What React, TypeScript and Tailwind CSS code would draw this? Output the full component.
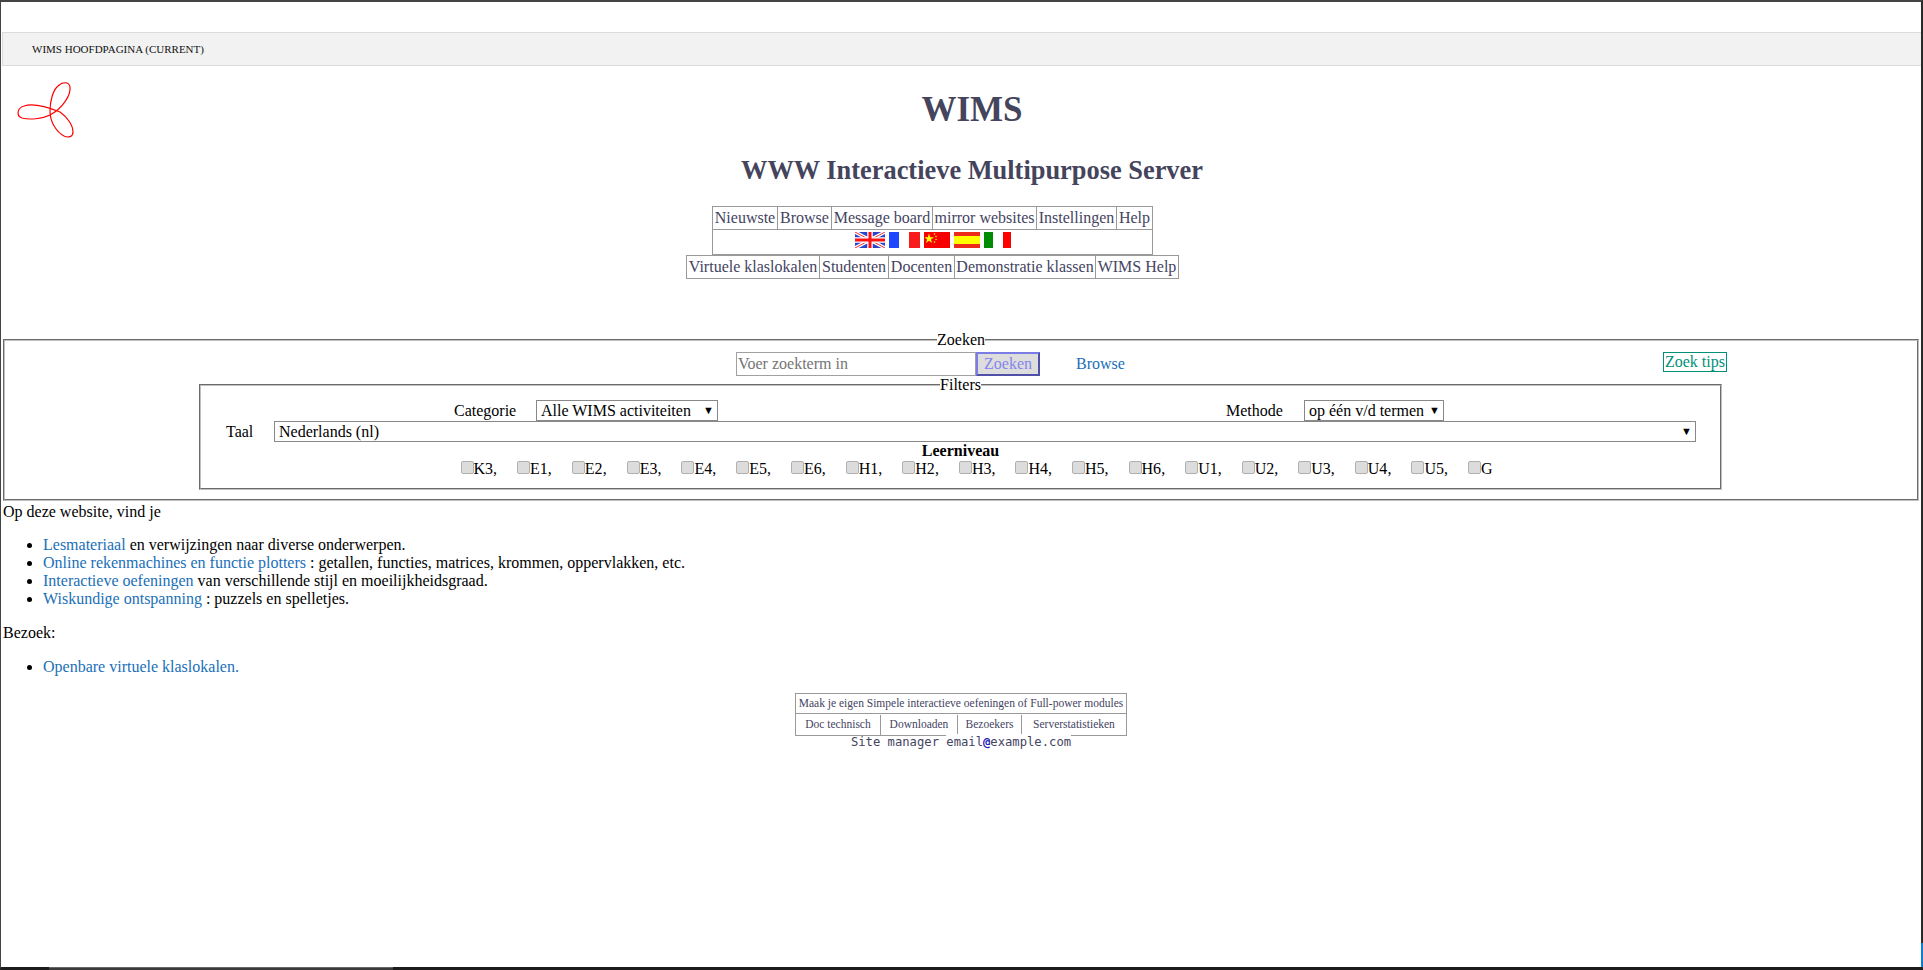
import React from "react";

const serif = "font-['Liberation_Serif',serif]";

const levels = ["K3", "E1", "E2", "E3", "E4", "E5", "E6", "H1", "H2", "H3", "H4", "H5", "H6", "U1", "U2", "U3", "U4", "U5", "G"];

const topNav = [
  { label: "Nieuwste", width: "w-[65px]" },
  { label: "Browse", width: "w-[54px]" },
  { label: "Message board", width: "w-[101px]" },
  { label: "mirror websites", width: "w-[104px]" },
  { label: "Instellingen", width: "w-[80px]" },
  { label: "Help", width: "w-[36px]" },
];

const classNav = [
  { label: "Virtuele klaslokalen", width: "w-[133px]" },
  { label: "Studenten", width: "w-[69px]" },
  { label: "Docenten", width: "w-[66px]" },
  { label: "Demonstratie klassen", width: "w-[141px]" },
  { label: "WIMS Help", width: "w-[83px]" },
];

const Logo = () => (
  <svg width="60" height="60" viewBox="0 0 60 60" className="block" fill="none" stroke="#f00" strokeWidth="1.2">
    <path d="M35 34C27 38 14 39 7 37C1 35 2 27 9 25C18 22 30 25 45 31C52 36 58 44 58 51C58 56 53 57 49 55C42 51 35 42 35 30C35 20 38 9 43 5C47 1 54 0 55 6C56 14 48 27 35 34Z" />
  </svg>
);

const FlagUk = () => (
  <svg width="30" height="16" viewBox="0 0 30 16" className="block">
    <rect width="30" height="16" fill="#2a46c8" />
    <path d="M0 0L30 16M30 0L0 16" stroke="#fff" strokeWidth="3.5" />
    <path d="M0 0L30 16M30 0L0 16" stroke="#f33" strokeWidth="1" />
    <path d="M15 0V16M0 8H30" stroke="#fff" strokeWidth="5.5" />
    <path d="M15 0V16M0 8H30" stroke="#f11" strokeWidth="3" />
  </svg>
);

const FlagFr = () => (
  <svg width="31" height="16" viewBox="0 0 31 16" className="block">
    <rect width="10" height="16" fill="#1f47ff" />
    <rect x="10" width="10" height="16" fill="#fff" />
    <rect x="20" width="11" height="16" fill="#f91c1c" />
  </svg>
);

const FlagCn = () => (
  <svg width="26" height="16" viewBox="0 0 26 16" className="block">
    <rect width="26" height="16" fill="#f80000" />
    <path d="M5 1.5L6.2 5.2H10L6.9 7.4L8.1 11L5 8.8L1.9 11L3.1 7.4L0.5 5.2H3.8Z" fill="#ff0" />
    <circle cx="10.5" cy="2" r=".8" fill="#ff0" />
    <circle cx="12" cy="4.5" r=".8" fill="#ff0" />
    <circle cx="12" cy="7.5" r=".8" fill="#ff0" />
    <circle cx="10.5" cy="10" r=".8" fill="#ff0" />
  </svg>
);

const FlagEs = () => (
  <svg width="26" height="16" viewBox="0 0 26 16" className="block">
    <rect width="26" height="16" fill="#ee2a1a" />
    <rect y="4" width="26" height="8" fill="#ff0" />
  </svg>
);

const FlagIt = () => (
  <svg width="27" height="16" viewBox="0 0 27 16" className="block">
    <rect width="9" height="16" fill="#008c00" />
    <rect x="9" width="10" height="16" fill="#fff" />
    <rect x="19" width="8" height="16" fill="#f00" />
  </svg>
);

const NavCell = ({ children, className }: { children: React.ReactNode; className: string }) => (
  <td className={"border border-[#999] h-[23px] leading-none text-center whitespace-nowrap text-[#44445f] " + className}>{children}</td>
);

const SelectBox = ({ label, className }: { label: string; className: string }) => (
  <div className={"flex items-center justify-between bg-white border border-[#888] pl-[4px] pr-[3px] h-[21px] " + className}>
    <span>{label}</span>
    <span className="text-[11px] leading-none">▼</span>
  </div>
);

export default function App() {
  return (
    <div className={serif + " relative h-[970px] w-full bg-white text-[16px] text-black border-t-2 border-l border-r-2 border-b-[3px] border-t-[#444] border-l-[#444] border-r-[#2a2a2a] border-b-[#1c1c1c]"}>
      <div className="mt-[30px] ml-px h-[34px] flex items-center pl-[29px] pt-px bg-[#f2f2f2] border-y border-l border-[#dcdcdc] text-[11px] text-[#111]">
        WIMS HOOFDPAGINA (CURRENT)
      </div>

      <div className="absolute left-[14px] top-[79px]">
        <Logo />
      </div>

      <h1 className="mt-[24px] pl-[22px] text-center text-[35px] font-bold leading-[40px] text-[#44445c]">WIMS</h1>
      <h2 className="mt-[25px] pl-[22px] text-center text-[26.4px] font-bold leading-[30px] text-[#44445c]">WWW Interactieve Multipurpose Server</h2>

      <table className="ml-[711px] mt-[21px] border-collapse">
        <tbody>
          <tr>
            {topNav.map((t) => (
              <NavCell key={t.label} className={t.width}>{t.label}</NavCell>
            ))}
          </tr>
          <tr>
            <td colSpan={6} className="border border-[#999] h-[25px]">
              <div className="flex justify-center gap-[4px] pb-[4px]">
                <FlagUk />
                <FlagFr />
                <FlagCn />
                <FlagEs />
                <FlagIt />
              </div>
            </td>
          </tr>
        </tbody>
      </table>
      <table className="ml-[685px] border-collapse">
        <tbody>
          <tr>
            {classNav.map((t) => (
              <NavCell key={t.label} className={t.width}>{t.label}</NavCell>
            ))}
          </tr>
        </tbody>
      </table>

      <fieldset className="mt-[52px] ml-[2px] mr-[2px] h-[170px] border-2 [border-style:groove] border-[#c0c0c0]">
        <legend className="mx-auto leading-[18px]">Zoeken</legend>
        <div className="relative h-[24px] mt-[3px] flex">
          <div className="flex ml-[731px]">
            <div className="w-[240px] h-[24px] border border-[#a0a0a0] pl-[1px] leading-[22px] text-[#757575]">Voer zoekterm in</div>
            <div className="w-[64px] h-[24px] border-2 border-t-[#7c7ce6] border-l-[#7c7ce6] border-r-[#5050a8] border-b-[#5050a8] bg-[#dddddd] text-center leading-[20px] text-[#8585ee]">Zoeken</div>
          </div>
          <a className="ml-[36px] leading-[24px] text-[#1a6fb8]">Browse</a>
          <a className="ml-[538px] h-[20px] px-[1px] leading-[18px] border border-[#00907a] text-[#00907a]">Zoek tips</a>
        </div>
        <fieldset className="mt-[1px] ml-[194px] w-[1523px] h-[113px] border-2 [border-style:groove] border-[#c0c0c0]">
          <legend className="mx-auto leading-[16px]">Filters</legend>
          <div className="flex items-center h-[21px] mt-[7px]">
            <span className="ml-[253px] w-[82px]">Categorie</span>
            <SelectBox label="Alle WIMS activiteiten" className="w-[182px]" />
            <span className="ml-[508px] w-[78px]">Methode</span>
            <SelectBox label="op één v/d termen" className="w-[140px]" />
          </div>
          <div className="flex items-center h-[21px]">
            <span className="ml-[25px] w-[48px]">Taal</span>
            <SelectBox label="Nederlands (nl)" className="w-[1422px]" />
          </div>
          <div className="text-center font-bold leading-[18px]">Leerniveau</div>
          <div className="flex justify-center leading-[18px] gap-[20px] pl-[32px]">
            {levels.map((l, i) => (
              <label key={l} className="flex items-center">
                <input
                  type="checkbox"
                  readOnly
                  className="appearance-none size-[13px] mb-[3px] bg-[#dcdcdc] border border-[#b0b0b0] rounded-[2px]"
                />
                {l}
                {i < levels.length - 1 ? "," : ""}
              </label>
            ))}
          </div>
        </fieldset>
      </fieldset>

      <div className="ml-[2px] leading-[18px]">
        <p className="mt-[2px]">Op deze website, vind je</p>
        <ul className="list-disc pl-[40px] mt-[15px]">
          <li><a className="text-[#1a6fb8]">Lesmateriaal</a> en verwijzingen naar diverse onderwerpen.</li>
          <li><a className="text-[#1a6fb8]">Online rekenmachines en functie plotters</a> : getallen, functies, matrices, krommen, oppervlakken, etc.</li>
          <li><a className="text-[#1a6fb8]">Interactieve oefeningen</a> van verschillende stijl en moeilijkheidsgraad.</li>
          <li><a className="text-[#1a6fb8]">Wiskundige ontspanning</a> : puzzels en spelletjes.</li>
        </ul>
        <p className="mt-[16px]">Bezoek:</p>
        <ul className="list-disc pl-[40px] mt-[16px]">
          <li><a className="text-[#1a6fb8]">Openbare virtuele klaslokalen.</a></li>
        </ul>
      </div>

      <div className="w-[332px] mx-auto mt-[17px] border border-[#999] text-[11.5px] leading-none text-[#44445f]">
        <div className="h-[20px] pt-px flex items-center justify-center border-b border-[#999] whitespace-nowrap">
          Maak je eigen Simpele interactieve oefeningen of Full-power modules
        </div>
        <div className="flex h-[21px] pt-px">
          <span className="w-[85px] flex items-center justify-center border-r border-[#999]">Doc technisch</span>
          <span className="w-[77px] flex items-center justify-center border-r border-[#999]">Downloaden</span>
          <span className="w-[64px] flex items-center justify-center border-r border-[#999]">Bezoekers</span>
          <span className="flex-1 flex items-center justify-center">Serverstatistieken</span>
        </div>
      </div>
      <div className="relative -mt-[3px] text-center font-['DejaVu_Sans_Mono',monospace] text-[12.2px] leading-[18px] text-[#44445f]">
        Site manager <span className="bg-white py-[1px]">email<span className="font-bold text-[#2222bb]">@</span>example.com</span>
      </div>

      <div className="absolute right-[-2px] bottom-0 w-[2px] h-[24px] bg-[#0a7fd4]" />
      <div className="absolute left-[48px] bottom-[-3px] w-[344px] h-[3px] bg-[#3a3a3a] border-t border-[#666]" />
    </div>
  );
}
